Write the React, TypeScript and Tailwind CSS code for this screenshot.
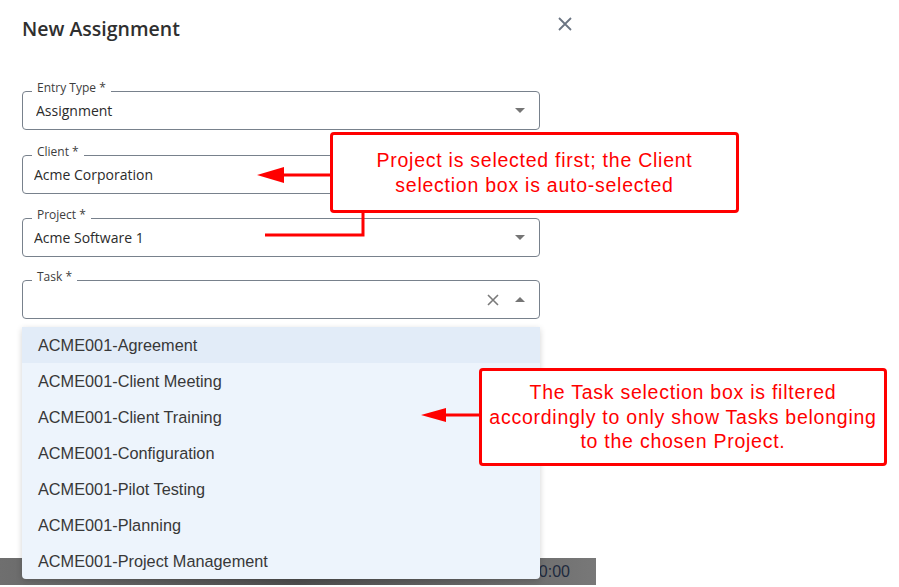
import React from 'react';

const TASKS = [
  'ACME001-Agreement',
  'ACME001-Client Meeting',
  'ACME001-Client Training',
  'ACME001-Configuration',
  'ACME001-Pilot Testing',
  'ACME001-Planning',
  'ACME001-Project Management',
];

const CaretDown = () => (
  <svg width="10" height="5" viewBox="0 0 10 5" className="shrink-0">
    <path d="M0 0h10L5 5z" fill="#757575" />
  </svg>
);

const CaretUp = () => (
  <svg width="10" height="5" viewBox="0 0 10 5" className="shrink-0">
    <path d="M0 5h10L5 0z" fill="#757575" />
  </svg>
);

const ClearIcon = () => (
  <svg width="12" height="12" viewBox="0 0 12 12" className="shrink-0">
    <path d="M1 1l10 10M11 1L1 11" stroke="#7a7a7a" strokeWidth="1.6" />
  </svg>
);

interface FieldProps {
  label: string;
  value?: string;
  className?: string;
  padClass?: string;
  children?: React.ReactNode;
}

// Outlined select field with floating label on the border
const Field: React.FC<FieldProps> = ({ label, value, className, padClass = 'pl-[13px]', children }) => (
  <div className={`relative h-[39px] w-[518px] rounded-[4px] border border-[#78818c] flex items-center pr-[14px] ${padClass} ${className ?? ''}`}>
    <span className="absolute left-[9px] -top-[12px] bg-white px-[5px] text-[12px] leading-[16px] text-[#3d3d3d]">
      {label}
    </span>
    <span className="flex-1 text-[14px] text-[#2b2b2b] truncate">{value}</span>
    {children}
  </div>
);

export default function App() {
  return (
    <div className="relative w-[899px] h-[587px] overflow-hidden bg-white" style={{ fontFamily: '"Open Sans", sans-serif' }}>
      {/* underlying page footer bar */}
      <div className="absolute left-0 bottom-[2px] w-[596px] h-[27px] bg-gradient-to-r from-[#6f6f6f] via-[#4f4f4f] to-[#787878] flex items-center justify-end pr-[26px]">
        <span className="text-[16px] text-[#1e2a3e]" style={{ fontFamily: '"Liberation Sans", Arial, sans-serif' }}>00:00</span>
      </div>

      <div className="relative pl-[22px] pt-[15px]">
        <div className="flex items-start justify-between w-[551px]">
          <h1 className="text-[19.5px] leading-[28px] font-semibold text-[#2f2f2f]">New Assignment</h1>
          <svg width="16" height="16" viewBox="0 0 16 16" className="mt-[1px]">
            <path d="M2 2l12 12M14 2L2 14" stroke="#6b7583" strokeWidth="1.8" />
          </svg>
        </div>

        <Field label="Entry Type *" value="Assignment" className="mt-[48px]">
          <CaretDown />
        </Field>
        <Field label="Client *" value="Acme Corporation" padClass="pl-[11px]" className="mt-[25px]">
          <CaretDown />
        </Field>
        <Field label="Project *" value="Acme Software 1" padClass="pl-[11px]" className="mt-[24px]">
          <CaretDown />
        </Field>
        <Field label="Task *" className="mt-[23px]">
          <div className="flex items-center gap-[16px]">
            <ClearIcon />
            <CaretUp />
          </div>
        </Field>

        <ul
          className="mt-[8px] w-[518px] bg-[#edf4fc] rounded-b-[4px] shadow-[0_2px_6px_rgba(0,0,0,0.18)]"
          style={{ fontFamily: '"Liberation Sans", Arial, sans-serif' }}
        >
          {TASKS.map((t, i) => (
            <li
              key={t}
              className={`h-[36px] flex items-center pl-[16px] text-[16.3px] text-[#383838] ${i === 0 ? 'bg-[#e2ecf8]' : ''}`}
            >
              {t}
            </li>
          ))}
        </ul>
      </div>

      {/* annotation arrows */}
      <svg className="absolute inset-0 pointer-events-none" width="899" height="587">
        <path d="M331 175H282" stroke="#f00" strokeWidth="3" />
        <path d="M257 175L284 167V183Z" fill="#f00" />
        <path d="M363 211V235H265" stroke="#f00" strokeWidth="3" fill="none" />
        <path d="M480 415H443" stroke="#f00" strokeWidth="3" />
        <path d="M421 415L446 408V422Z" fill="#f00" />
      </svg>

      {/* annotation callouts */}
      <div
        className="absolute left-[330px] top-[132px] w-[409px] h-[81px] rounded-[4px] border-[3px] border-[#f00] bg-white flex items-center justify-center text-center text-[19.5px] leading-[25px] tracking-[0.75px] text-[#f00]"
        style={{ fontFamily: '"Liberation Sans", Arial, sans-serif' }}
      >
        <p>
          Project is selected first; the Client
          <br />
          selection box is auto-selected
        </p>
      </div>
      <div
        className="absolute left-[479px] top-[368px] w-[408px] h-[98px] rounded-[4px] border-[3px] border-[#f00] bg-white flex items-center justify-center text-center text-[19.5px] leading-[24.5px] tracking-[0.75px] text-[#f00]"
        style={{ fontFamily: '"Liberation Sans", Arial, sans-serif' }}
      >
        <p>
          The Task selection box is filtered
          <br />
          accordingly to only show Tasks belonging
          <br />
          to the chosen Project.
        </p>
      </div>
    </div>
  );
}
